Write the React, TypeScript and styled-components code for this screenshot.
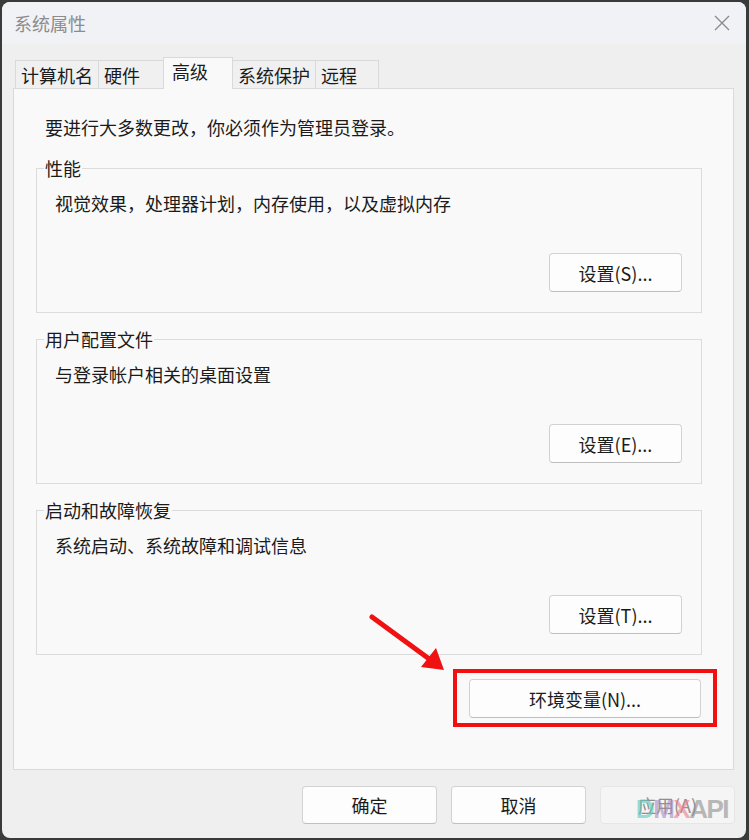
import React from "react";
import styled, { createGlobalStyle } from "styled-components";

const GlobalStyle = createGlobalStyle`
  html, body {
    margin: 0;
    padding: 0;
    background: #3a3a3a;
  }
  body {
    font-family: "Noto Sans CJK SC", "Microsoft YaHei", sans-serif;
  }
  #root {
    width: 749px;
    height: 840px;
    padding: 2px 0 0 2px;
    box-sizing: border-box;
  }
`;

const Window = styled.div`
  position: relative;
  width: 744px;
  height: 836px;
  border-radius: 8px;
  overflow: hidden;
  background: #efefef;
  display: flex;
  flex-direction: column;
  font-size: 18px;
  line-height: 22px;
  color: #1b1b1b;
`;

const TitleBar = styled.div`
  flex: none;
  height: 42px;
  display: flex;
  align-items: center;
  justify-content: space-between;
  padding: 0 16px 0 12px;
  background: #f1f2f6;
`;

const Title = styled.span`
  color: #8c8c8c;
`;

const Body = styled.div`
  flex: 1;
  display: flex;
  flex-direction: column;
  padding: 13px 12px 0 11px;
`;

const TabRow = styled.div`
  display: flex;
  align-items: flex-end;
  margin: 0 0 -1px 2px;
  position: relative;
  z-index: 1;
`;

const Tab = styled.div<{ $active?: boolean; $width: number }>`
  box-sizing: border-box;
  width: ${(p) => p.$width}px;
  height: ${(p) => (p.$active ? 32 : 28)}px;
  margin-bottom: ${(p) => (p.$active ? 0 : 1)}px;
  margin-left: -1px;
  padding: 0 0 ${(p) => (p.$active ? 5 : 0)}px ${(p) => (p.$active ? 8 : 5)}px;
  display: flex;
  align-items: center;
  border: 1px solid #d9d9d9;
  border-bottom: none;
  background: ${(p) => (p.$active ? "#f9f9f9" : "#f0f0f0")};
  position: relative;
  z-index: ${(p) => (p.$active ? 2 : 1)};
  white-space: nowrap;
  &:first-child {
    margin-left: 0;
  }
`;

const Panel = styled.div`
  flex: 1;
  display: flex;
  flex-direction: column;
  border: 1px solid #dadada;
  background: #f9f9f9;
  padding: 27px 31px 0 22px;
`;

const Intro = styled.div`
  margin-left: 9px;
`;

const GroupBox = styled.div<{ $first?: boolean }>`
  position: relative;
  margin-top: ${(p) => (p.$first ? 30 : 26)}px;
  border: 1px solid #dcdcdc;
  padding: 23px 19px 20px 18px;
  display: flex;
  flex-direction: column;
`;

const GroupLabel = styled.span`
  position: absolute;
  top: -12px;
  left: 7px;
  padding: 0 1px;
  background: #f9f9f9;
`;

const ButtonRow = styled.div`
  display: flex;
  justify-content: flex-end;
  margin-top: 39px;
`;

const Button = styled.button<{ $width: number; $height?: number; $disabled?: boolean }>`
  box-sizing: border-box;
  width: ${(p) => p.$width}px;
  height: ${(p) => p.$height ?? 39}px;
  padding: 0;
  border: 1px solid ${(p) => (p.$disabled ? "#e6e6e6" : "#d2d2d2")};
  border-bottom-color: ${(p) => (p.$disabled ? "#e6e6e6" : "#bfbfbf")};
  border-radius: 4px;
  background: ${(p) => (p.$disabled ? "#f5f5f5" : "#fdfdfd")};
  color: ${(p) => (p.$disabled ? "#8f8f8f" : "#1b1b1b")};
  font-family: inherit;
  font-size: 18px;
  line-height: 22px;
`;

const Highlight = styled.div`
  align-self: flex-end;
  margin: 14px -15px 0 0;
  border: 4px solid #f20f0f;
  padding: 6px 12px 5px;
  display: flex;
`;

const Footer = styled.div`
  flex: none;
  display: flex;
  justify-content: flex-end;
  gap: 14px;
  padding: 16px 11px 14px 0;
`;

const ArrowMark = styled.svg`
  position: absolute;
  left: 360px;
  top: 605px;
  width: 90px;
  height: 70px;
  pointer-events: none;
`;

const Watermark = styled.div`
  position: absolute;
  right: 18px;
  bottom: 16px;
  font-family: "Liberation Sans", Arial, sans-serif;
  font-weight: 700;
  font-size: 26px;
  line-height: 26px;
  letter-spacing: -1.5px;
  opacity: 0.6;
  pointer-events: none;
`;

const Mark = styled.span<{ $color: string }>`
  color: ${(p) => p.$color};
`;

const tabs = [
  { label: "计算机名", width: 84 },
  { label: "硬件", width: 66 },
  { label: "高级", width: 70, active: true },
  { label: "系统保护", width: 84 },
  { label: "远程", width: 64 },
];

const groups = [
  { title: "性能", text: "视觉效果，处理器计划，内存使用，以及虚拟内存", button: "设置(S)..." },
  { title: "用户配置文件", text: "与登录帐户相关的桌面设置", button: "设置(E)..." },
  { title: "启动和故障恢复", text: "系统启动、系统故障和调试信息", button: "设置(T)..." },
];

export default function App() {
  return (
    <>
      <GlobalStyle />
      <Window>
        <TitleBar>
          <Title>系统属性</Title>
          <svg width="16" height="16" viewBox="0 0 16 16">
            <path d="M1 1 L15 15 M15 1 L1 15" stroke="#8a8a8a" strokeWidth="1.3" fill="none" />
          </svg>
        </TitleBar>
        <Body>
          <TabRow>
            {tabs.map((t) => (
              <Tab key={t.label} $width={t.width} $active={t.active}>
                {t.label}
              </Tab>
            ))}
          </TabRow>
          <Panel>
            <Intro>要进行大多数更改，你必须作为管理员登录。</Intro>
            {groups.map((g, i) => (
              <GroupBox key={g.title} $first={i === 0}>
                <GroupLabel>{g.title}</GroupLabel>
                <div>{g.text}</div>
                <ButtonRow>
                  <Button $width={133}>{g.button}</Button>
                </ButtonRow>
              </GroupBox>
            ))}
            <Highlight>
              <Button $width={232}>环境变量(N)...</Button>
            </Highlight>
          </Panel>
        </Body>
        <Footer>
          <Button $width={135} $height={38}>确定</Button>
          <Button $width={135} $height={38}>取消</Button>
          <Button $width={135} $height={38} $disabled>应用(A)</Button>
        </Footer>
        <ArrowMark viewBox="0 0 90 70">
          <path d="M10 10 L70 54" stroke="#f01212" strokeWidth="5" strokeLinecap="round" fill="none" />
          <path d="M82 63 L59 60 L74 41 Z" fill="#f01212" />
        </ArrowMark>
        <Watermark>
          <Mark $color="#5fc9bf">D</Mark>
          <Mark $color="#a48bc6">M</Mark>
          <Mark $color="#f07b8c">X</Mark>
          <Mark $color="#8e8e8e">API</Mark>
        </Watermark>
      </Window>
    </>
  );
}
